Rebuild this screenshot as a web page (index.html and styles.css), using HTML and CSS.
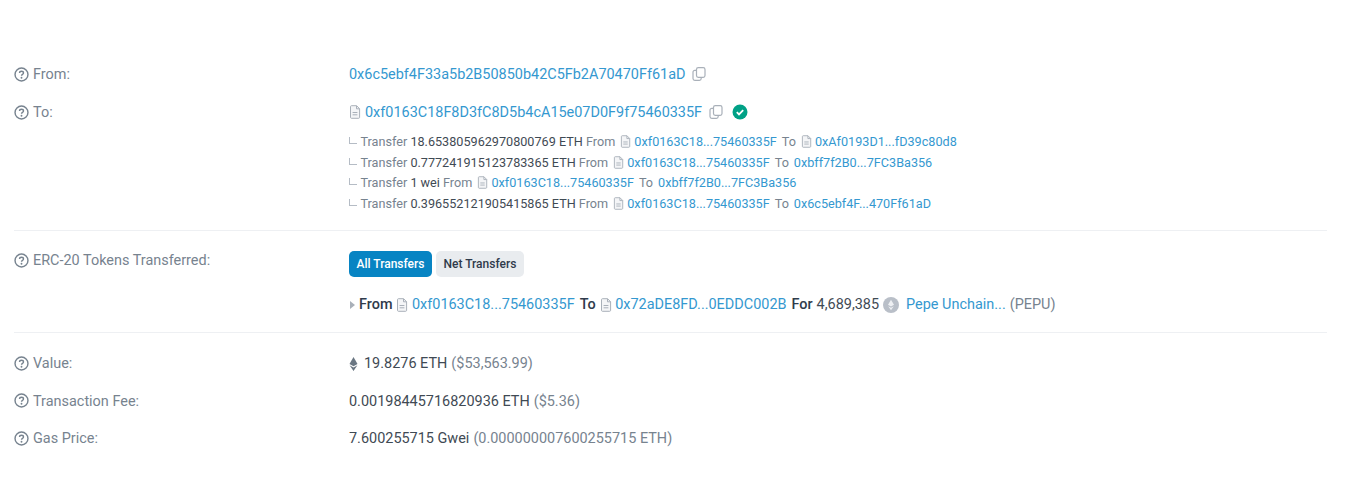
FILE: index.html
```html
<!DOCTYPE html>
<html lang="en">
<head>
    <meta charset="UTF-8">
    <meta name="viewport" content="width=device-width, initial-scale=1.0">
    <title>Transaction Details</title>
    <link rel="stylesheet" href="styles.css">
</head>
<body>
    <svg class="defs" width="0" height="0">
        <symbol id="help" viewBox="0 0 16 16">
            <circle cx="8" cy="8" r="6.900" fill="none" stroke="currentColor" stroke-width="1.500"/>
            <path d="M5.900 6.400C5.900 5.200 6.900 4.500 8 4.500s2.100 .7 2.100 1.800c0 1.500-2.100 1.600-2.100 3" fill="none" stroke="currentColor" stroke-width="1.500"/>
            <circle cx="8" cy="11.400" r="1" fill="currentColor"/>
        </symbol>
        <symbol id="doc" viewBox="0 0 12 14">
            <path d="M1.500 1.600c0-.5.4-.9.9-.9h5.200l3 3v8.700c0 .5-.4.9-.9.9H2.400c-.5 0-.9-.4-.9-.9z" fill="#f4f5f7" stroke="currentColor" stroke-width="1"/>
            <path d="M7.500 .8v3h3M3.600 7.500h4.800M3.600 9.800h4.800" fill="none" stroke="currentColor" stroke-width="1"/>
        </symbol>
        <symbol id="copy" viewBox="0 0 14 14">
            <rect x="4.500" y=".7" width="8.500" height="9.600" rx="1.800" fill="none" stroke="currentColor" stroke-width="1.200"/>
            <path d="M4.500 3.300H2.800C1.800 3.300 1 4.100 1 5.100v6.400c0 1 .8 1.800 1.800 1.800h4.600c1 0 1.800-.8 1.800-1.800v-1.200" fill="none" stroke="currentColor" stroke-width="1.200"/>
        </symbol>
        <symbol id="eth" viewBox="0 0 10 16">
            <path d="M5 0l4.600 8L5 10.700.4 8z" fill="currentColor"/>
            <path d="M.5 9.300L5 12l4.500-2.700L5 16z" fill="currentColor"/>
        </symbol>
    </svg>

    <main class="details">
        <section class="group">
            <div class="row row-from">
                <div class="label"><svg class="ico-help"><use href="#help"/></svg>From:</div>
                <div class="value">
                    <a href="#">0x6c5ebf4F33a5b2B50850b42C5Fb2A70470Ff61aD</a>
                    <svg class="ico-copy"><use href="#copy"/></svg>
                </div>
            </div>
            <div class="row row-to">
                <div class="label"><svg class="ico-help"><use href="#help"/></svg>To:</div>
                <div class="value">
                    <svg class="ico-doc"><use href="#doc"/></svg>
                    <a href="#">0xf0163C18F8D3fC8D5b4cA15e07D0F9f75460335F</a>
                    <svg class="ico-copy"><use href="#copy"/></svg>
                    <svg class="ico-ok" viewBox="0 0 16 16">
                        <circle cx="8" cy="8" r="7.500" fill="#00a186"/>
                        <path d="M4.800 8.200l2.200 2.200 4.200-4.200" fill="none" stroke="#fff" stroke-width="1.800"/>
                    </svg>
                </div>
            </div>
            <div class="row">
                <div class="label"></div>
                <ul class="internal">
                    <li><span class="elbow"></span>Transfer <b>18.653805962970800769 ETH</b> From <svg class="ico-doc-sm"><use href="#doc"/></svg><a href="#">0xf0163C18...75460335F</a><span class="kw-to">To</span><svg class="ico-doc-sm"><use href="#doc"/></svg><a href="#">0xAf0193D1...fD39c80d8</a></li>
                    <li><span class="elbow"></span>Transfer <b>0.777241915123783365 ETH</b> From <svg class="ico-doc-sm"><use href="#doc"/></svg><a href="#">0xf0163C18...75460335F</a><span class="kw-to">To</span><a href="#">0xbff7f2B0...7FC3Ba356</a></li>
                    <li><span class="elbow"></span>Transfer <b>1 wei</b> From <svg class="ico-doc-sm"><use href="#doc"/></svg><a href="#">0xf0163C18...75460335F</a><span class="kw-to">To</span><a href="#">0xbff7f2B0...7FC3Ba356</a></li>
                    <li><span class="elbow"></span>Transfer <b>0.396552121905415865 ETH</b> From <svg class="ico-doc-sm"><use href="#doc"/></svg><a href="#">0xf0163C18...75460335F</a><span class="kw-to">To</span><a href="#">0x6c5ebf4F...470Ff61aD</a></li>
                </ul>
            </div>
        </section>

        <section class="group tokens">
            <div class="row">
                <div class="label"><svg class="ico-help"><use href="#help"/></svg>ERC-20 Tokens Transferred:</div>
                <div class="value-col">
                    <div class="tabs">
                        <button class="tab active">All Transfers</button>
                        <button class="tab">Net Transfers</button>
                    </div>
                    <div class="token-line">
                        <span class="caret"></span>
                        <strong>From</strong>
                        <svg class="ico-doc"><use href="#doc"/></svg>
                        <a href="#">0xf0163C18...75460335F</a>
                        <strong class="kw">To</strong>
                        <svg class="ico-doc"><use href="#doc"/></svg>
                        <a href="#">0x72aDE8FD...0EDDC002B</a>
                        <strong class="kw">For</strong>
                        <span class="dark">4,689,385</span>
                        <svg class="ico-token" viewBox="0 0 16 16">
                            <circle cx="8" cy="8" r="8" fill="#b9bfc8"/>
                            <path d="M8 2.800l3 5-3 1.700-3-1.700zM5.200 9.200L8 10.800l2.800-1.600L8 13.200z" fill="#eef0f3"/>
                        </svg>
                        <a href="#">Pepe Unchain...</a>
                        <span>(PEPU)</span>
                    </div>
                </div>
            </div>
        </section>

        <section class="group last">
            <div class="row row-sum">
                <div class="label"><svg class="ico-help"><use href="#help"/></svg>Value:</div>
                <div class="value"><svg class="ico-eth"><use href="#eth"/></svg><span class="dark">19.8276 ETH</span><span class="muted">($53,563.99)</span></div>
            </div>
            <div class="row row-sum">
                <div class="label"><svg class="ico-help"><use href="#help"/></svg>Transaction Fee:</div>
                <div class="value"><span class="dark">0.00198445716820936 ETH</span><span class="muted">($5.36)</span></div>
            </div>
            <div class="row row-sum">
                <div class="label"><svg class="ico-help"><use href="#help"/></svg>Gas Price:</div>
                <div class="value"><span class="dark">7.600255715 Gwei</span><span class="muted">(0.000000007600255715 ETH)</span></div>
            </div>
        </section>
    </main>
</body>
</html>
```

FILE: styles.css
```css
body {
    margin: 0;
    background: #fff;
    color: #77838f;
    font-family: Roboto, "Liberation Sans", sans-serif;
    font-size: 14.45px;
    line-height: 20px;
    overflow: hidden;
}

a {
    color: #3498d0;
    text-decoration: none;
}

.defs {
    position: absolute;
}

.details {
    width: 1313px;
    margin-left: 14px;
    padding-top: 65px;
}

.group {
    border-bottom: 1px solid #eef0f3;
}

.group.last {
    border-bottom: none;
    padding-top: 21px;
}

.row {
    display: flex;
}

.label {
    flex: 0 0 335px;
    display: flex;
    align-items: center;
    align-self: flex-start;
    gap: 4px;
    height: 20px;
}

.value {
    display: flex;
    align-items: center;
    height: 20px;
    white-space: pre;
}

.dark {
    color: #3f4a54;
}

.muted {
    margin-left: 4px;
}

.row-to {
    margin-top: 18px;
}

.ico-help {
    width: 15px;
    height: 15px;
    margin-bottom: 2px;
    color: #77838f;
}

.ico-copy {
    width: 14px;
    height: 14px;
    margin: 0 0 2px 6.500px;
    color: #a9b0b9;
}

.ico-ok {
    width: 16px;
    height: 16px;
    margin: 0 0 2px 9.500px;
}

.ico-doc {
    width: 12px;
    height: 14px;
    color: #a9b0b9;
}

.row-to .ico-doc {
    margin: 0 4px 2px 0;
}

.ico-doc-sm {
    width: 11px;
    height: 13px;
    margin: 0 3px 0 2px;
    color: #a9b0b9;
    vertical-align: -2px;
}

.internal {
    list-style: none;
    margin: 9px 0 16px;
    padding: 0;
    font-size: 12.65px;
    line-height: 20.5px;
}

.internal b {
    font-weight: 400;
    color: #3f4a54;
}

.kw-to {
    margin: 0 5px;
}

.kw-to + .ico-doc-sm {
    margin-left: 0;
}

.elbow {
    display: inline-block;
    width: 7px;
    height: 6px;
    margin: 0 3.500px 2px 0;
    border-left: 1px solid #b5bcc5;
    border-bottom: 1px solid #b5bcc5;
}

.tokens {
    padding-top: 20px;
    padding-bottom: 17px;
}

.tabs {
    display: flex;
    gap: 4px;
}

.tab {
    height: 26px;
    padding: 0 7.500px;
    border: none;
    border-radius: 5px;
    background: #e9ecef;
    color: #2f3b4b;
    font: 500 12px Roboto, sans-serif;
}

.tab.active {
    background: #0784c3;
    color: #fff;
}

.token-line {
    margin-top: 18px;
    white-space: nowrap;
    display: flex;
    align-items: center;
    height: 20px;
    gap: 4px;
}

.token-line .ico-doc {
    margin-right: -0.500px;
}

.token-line strong {
    font-weight: 500;
    color: #2f3b4b;
}

.token-line .kw {
    margin-left: 1px;
}

.caret {
    width: 0;
    height: 0;
    border-left: 5px solid #a9b0b9;
    border-top: 4px solid transparent;
    border-bottom: 4px solid transparent;
    margin-left: 1px;
}

.ico-token {
    width: 16px;
    height: 16px;
    margin-right: 3px;
}

.row-sum {
    margin-bottom: 17.500px;
}

.ico-eth {
    width: 9px;
    height: 14px;
    color: #6a7682;
    margin-right: 6px;
}
```
